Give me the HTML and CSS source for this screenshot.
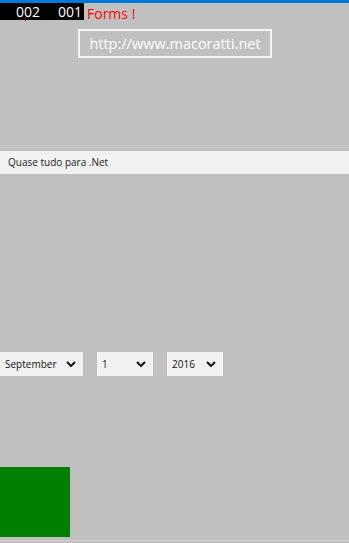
FILE: index.html
```html
<!DOCTYPE html>
<html>
<head>
<meta charset="utf-8">
<link rel="stylesheet" href="styles.css">
</head>
<body>
<div class="titlebar"></div>
<div class="toprow">
  <div class="counter"><span class="num n1">002</span><span class="num n2">001</span><span class="tick"></span></div>
  <div class="forms">Forms !</div>
</div>
<div class="urlbox">http://www.macoratti.net</div>
<div class="band">Quase tudo para .Net</div>
<div class="dates">
  <div class="sel s-month"><span>September</span><svg viewBox="0 0 10 6" class="chev"><path d="M1 1 L5 5 L9 1" /></svg></div>
  <div class="sel s-day"><span>1</span><svg viewBox="0 0 10 6" class="chev"><path d="M1 1 L5 5 L9 1" /></svg></div>
  <div class="sel s-year"><span>2016</span><svg viewBox="0 0 10 6" class="chev"><path d="M1 1 L5 5 L9 1" /></svg></div>
</div>
<div class="greenbox"></div>
<div class="footline"></div>
</body>
</html>
```
FILE: styles.css
```css
html, body {
  margin: 0;
  padding: 0;
  background: #c0c0c0;
  font-family: "Open Sans", "Noto Sans", sans-serif;
  height: 543px;
  overflow: hidden;
}
.titlebar {
  height: 3px;
  background: #0078d7;
}
.toprow {
  display: flex;
  align-items: flex-start;
  height: 17px;
}
.counter {
  position: relative;
  width: 84px;
  height: 17px;
  background: #000;
  color: #fff;
  font-size: 14px;
  line-height: 17px;
  display: flex;
}
.num { display: block; }
.n1 { margin-left: 16px; }
.n2 { margin-left: 18px; }
.tick {
  position: absolute;
  left: 25px;
  top: 16px;
  width: 1px;
  height: 2px;
  background: #c00000;
}
.forms {
  margin-left: 3px;
  color: #ff0000;
  font-size: 14px;
  line-height: 22px;
}
.urlbox {
  margin: 9px 0 0 78px;
  width: 190px;
  height: 25px;
  border: 2px solid #f4f4f4;
  color: #fff;
  font-size: 14.5px;
  line-height: 26px;
  text-align: center;
}
.band {
  margin-top: 93px;
  height: 23px;
  background: #f2f2f2;
  color: #222;
  font-size: 10px;
  line-height: 22px;
  padding-left: 8px;
}
.dates {
  margin-top: 178px;
  display: flex;
  height: 24px;
}
.sel {
  background: #f2f2f2;
  height: 24px;
  display: flex;
  align-items: center;
  justify-content: space-between;
  box-sizing: border-box;
  padding: 0 7px 0 5px;
  font-size: 10px;
  color: #111;
}
.s-month { width: 83px; }
.s-day { width: 56px; margin-left: 14px; }
.s-year { width: 56px; margin-left: 14px; }
.chev {
  width: 10px;
  height: 6px;
  fill: none;
  stroke: #111;
  stroke-width: 2;
}
.greenbox {
  margin-top: 91px;
  width: 70px;
  height: 70px;
  background: #008000;
}
.footline {
  margin-top: 3px;
  height: 1px;
  background: #d0d0d0;
}
```
